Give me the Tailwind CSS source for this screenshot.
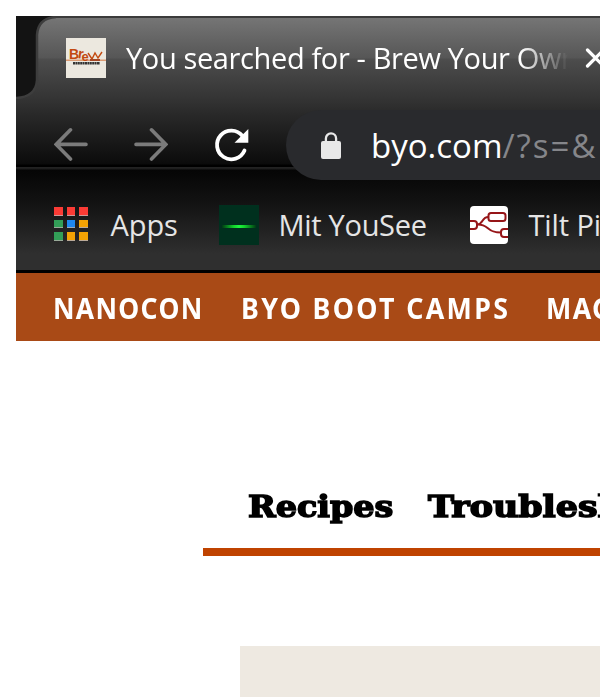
<!DOCTYPE html>
<html lang="en">
<head>
<meta charset="utf-8">
<title>Brew Your Own</title>
<script src="https://cdn.jsdelivr.net/npm/@tailwindcss/browser@4"></script>
</head>
<body class="bg-white overflow-hidden w-[600px] h-[697px] font-['Open_Sans','Noto_Sans',sans-serif]">
<div class="pl-4 pt-4 w-[600px] h-[697px] overflow-hidden whitespace-nowrap">
  <header class="h-[257px] border-b-3 border-black overflow-hidden bg-[linear-gradient(to_bottom,#3b3b3b_0px,#3b3b3b_2px,#757575_2px,#565656_42px,#4d4d4d_43px,#333333_84px,#2b2b2b_95px,#0b0b0b_148px,#000_149px,#000_151px,#242424_151px,#1c1c1c_153px,#050505_154px,#141414_190px,#2f2f2f_238px,#2f2f2f_254px)]">
    <div class="flex h-[84px] items-start">
      <svg class="w-[40px] h-[84px] shrink-0" viewBox="0 0 40 84">
        <path d="M0 0H40Q22 2 21 19V64Q20 81 0 82Z" fill="#131313"/>
        <path d="M40 1Q22 2 21 19V64Q20 81 0 82" fill="none" stroke="#3d3d3d" stroke-width="2.5"/>
      </svg>
      <svg class="ml-[10px] mt-[22px] size-10 shrink-0" viewBox="0 0 40 40">
        <rect width="40" height="40" fill="#ece8df"/>
        <rect y="21.5" width="40" height="1.5" fill="#dc9a72"/>
        <g fill="#c34a10" font-family="Liberation Sans" font-weight="bold"><text x="3" y="21" font-size="14">B</text><text x="11.5" y="20" font-size="14" transform="rotate(8 12 20)">r</text><text x="15.5" y="23" font-size="13">e</text></g>
        <path d="M22 15l4 6 3-6 3 5 4-6" fill="none" stroke="#c34a10" stroke-width="1.4"/>
        <path d="M24 22h10" stroke="#a64724" stroke-width="2"/>
        <path d="M7 25.2h27" stroke="#333" stroke-width="2.4" stroke-dasharray="2 .4"/>
      </svg>
      <div class="ml-[20px] mt-[22px] w-[442px] shrink-0 overflow-hidden text-[29px] leading-[40px] tracking-[-0.37px] text-white [mask-image:linear-gradient(to_right,#000_395px,transparent_442px)]">You searched for - Brew Your Own</div>
      <svg class="ml-[15px] mt-[32px] w-6 h-5 shrink-0" viewBox="0 0 24 20" fill="none" stroke="#fff" stroke-width="3.2" stroke-linecap="round"><path d="M4.5 2l16 16M20.5 2l-16 16"/></svg>
    </div>
    <div class="flex h-[88px] items-start">
      <svg class="ml-[38px] mt-[27px] w-[34px] h-[34px] shrink-0" viewBox="0 0 34 34" fill="none" stroke="#7b7b7b" stroke-width="3.6" stroke-linecap="round"><path d="M32 17.4H3M16.5 2.8L2.2 17.4 16.5 32"/></svg>
      <svg class="ml-[46px] mt-[27px] w-[34px] h-[34px] shrink-0" viewBox="0 0 34 34" fill="none" stroke="#7b7b7b" stroke-width="3.6" stroke-linecap="round"><path d="M2 17.4H31M17.5 2.8L31.8 17.4 17.5 32"/></svg>
      <svg class="ml-[46px] mt-[27px] w-[36px] h-[36px] shrink-0" viewBox="0 0 36 36" fill="none"><path d="M30.5 23.5A14.3 14.3 0 1 1 28.5 9" stroke="#fff" stroke-width="3.8" stroke-linecap="round"/><path d="M34.3 2V15.8H20.5Z" fill="#fff"/></svg>
      <div class="ml-[36px] mt-[10px] h-[70px] w-[340px] shrink-0 rounded-l-full bg-[#292a2d] flex items-start">
        <svg class="ml-[35px] mt-[22px] w-5 h-7 shrink-0" viewBox="0 0 20 28"><rect y="9" width="20" height="18" rx="2" fill="#e8e8e8"/><path d="M4.9 10V6.5a5.1 5.1 0 0 1 10.2 0V10" fill="none" stroke="#e8e8e8" stroke-width="2.3"/></svg>
        <div class="ml-[30px] mt-[14px] text-[33px] leading-[44px] text-white">byo.com<span class="text-[#85868a] tracking-[2px]">/?s=&amp;</span></div>
      </div>
    </div>
    <div class="flex h-[82px] items-start text-[29px] leading-[40px] text-[#e5e5e5]">
      <div class="ml-[38px] mt-[19px] grid grid-cols-3 gap-[4px] shrink-0">
        <i class="size-[8.5px] bg-[#fb3b35] border-b border-[#c99]"></i><i class="size-[8.5px] bg-[#fb3b35] border-b border-[#c99]"></i><i class="size-[8.5px] bg-[#fb3b35] border-b border-[#c99]"></i>
        <i class="size-[8.5px] bg-[#329e57] border-b border-[#9a9]"></i><i class="size-[8.5px] bg-[#1e88f0] border-b border-[#9ab]"></i><i class="size-[8.5px] bg-[#f3a304] border-b border-[#ba9]"></i>
        <i class="size-[8.5px] bg-[#329e57] border-b border-[#9a9]"></i><i class="size-[8.5px] bg-[#f3a304] border-b border-[#ba9]"></i><i class="size-[8.5px] bg-[#f3a304] border-b border-[#ba9]"></i>
      </div>
      <span class="ml-[23px] mt-[17px] w-[108px] shrink-0 tracking-[-0.1px]">Apps</span>
      <div class="mt-[17px] size-10 shrink-0 bg-[#00301e] flex items-center justify-center"><i class="mt-[3px] h-[3px] w-[34px] bg-[linear-gradient(to_right,#003a14,#12d42c_35%,#20f440_50%,#12d42c_65%,#003a14)]"></i></div>
      <span class="ml-[20px] mt-[17px] w-[191px] shrink-0 tracking-[-0.3px]">Mit YouSee</span>
      <svg class="mt-[18px] w-[38px] h-[38px] shrink-0" viewBox="0 0 38 38"><rect width="38" height="38" rx="4" fill="#fff"/><g fill="none" stroke="#961518" stroke-width="2"><path d="M0 15h4q3 0 3 3v2q0 3-3 3H0M38 23h-4q-3 0-3 3v2q0 3 3 3h4"/><rect x="18.5" y="7" width="17" height="8" rx="2.5"/><path d="M7 18.5C14 18.5 11 11 18.5 11M7 18.5C20 18 15 26.5 31 26.5"/></g></svg>
      <span class="ml-[21px] mt-[17px] tracking-[-0.1px]">Tilt Pi</span>
    </div>
  </header>
  <nav class="flex h-[68px] bg-[#a94a16] text-white font-bold text-[28.5px] leading-[71px] font-['Noto_Sans','Open_Sans',sans-serif]">
    <span class="ml-[37px] w-[188px] shrink-0 tracking-[1.4px] origin-left scale-x-[0.93]">NANOCON</span>
    <span class="w-[305px] shrink-0 tracking-[2.5px] origin-left scale-x-[0.94]">BYO BOOT CAMPS</span>
    <span class="tracking-[1.5px] origin-left scale-x-[0.94]">MAG</span>
  </nav>
  <main>
    <div class="ml-[187px] h-[215px] pt-[143px] pl-[45px] border-b-8 border-[#bf4300] flex font-bold text-black text-[29px] leading-[46px] font-['DejaVu_Serif','Liberation_Serif',serif] [-webkit-text-stroke:1.5px_#000]">
      <span class="w-[180px] shrink-0 origin-left scale-x-[1.15]">Recipes</span>
      <span class="origin-left scale-x-[1.2]">Troublesh</span>
    </div>
    <section class="ml-[224px] mt-[90px] h-[52px] bg-[#eee9e1]"></section>
  </main>
</div>
</body>
</html>
